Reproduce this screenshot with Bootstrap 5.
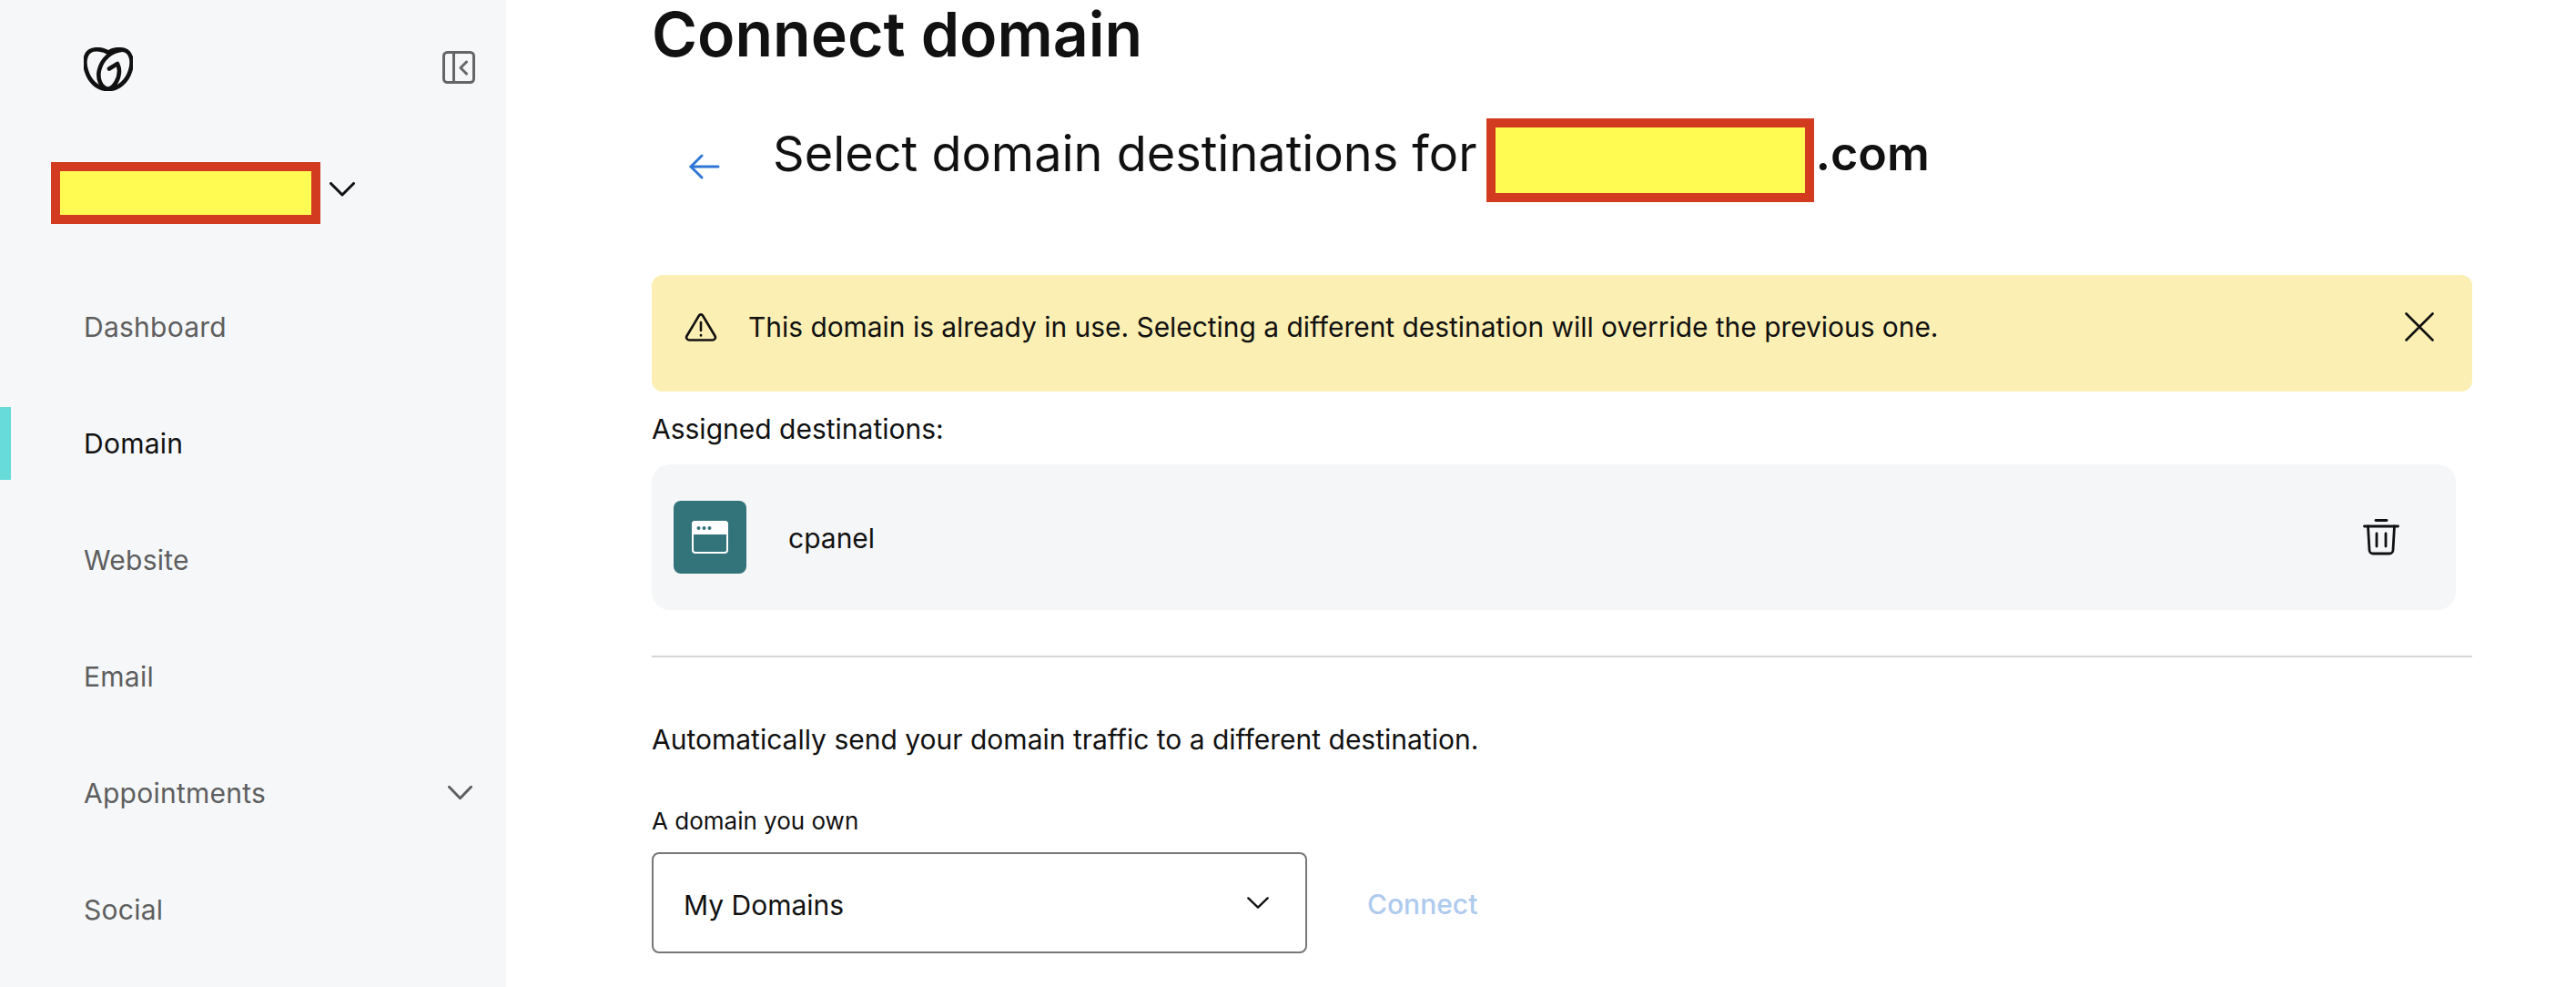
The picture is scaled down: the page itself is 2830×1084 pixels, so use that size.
<!doctype html>
<html lang="en">
<head>
<meta charset="utf-8">
<title>Connect domain</title>
<link href="https://cdn.jsdelivr.net/npm/bootstrap@5.3.0/dist/css/bootstrap.min.css" rel="stylesheet">
<style>
html,body{height:1084px;overflow:hidden}
body{font-family:Inter,"Liberation Sans",sans-serif;color:#111;background:#fff;font-size:30px}
.side-rail{width:556px;height:1084px;background:#f5f7f9;flex:none}
.side-top{padding:52px 34px 0 92px;height:178px}
.acct-row{padding-left:56px;height:117px;gap:10px;align-items:flex-start}
.acct-chev{margin-top:22px}
.redact{background:#fffb52;border-style:solid;border-color:#d23b20}
.redact-a{width:296px;height:68px;border-width:10px}
.redact-b{width:360px;height:92px;border-width:10px;margin:0 1px 0 11px}
.side-item{height:128px;color:#5e5e5e;font-size:30px;padding-right:37px;letter-spacing:.25px}
.side-item a{color:inherit;text-decoration:none}
.side-mark{width:12px;height:80px;margin-right:80px;flex:none}
.side-item.is-on{color:#111}
.side-item.is-on .side-mark{background:#66dbd9}
.main-pane{padding:0 114px 0 160px;min-width:0}
.page-title{font-size:68px;font-weight:600;line-height:74px;margin:0 0 56px 0;color:#111}
.dest-head{height:92px;margin-bottom:80px}
.back-arrow{margin:14px 58px 0 41px;flex:none;line-height:0}
.dest-title{font-size:54px;font-weight:400;margin:0;line-height:92px;padding-bottom:14px;color:#111;white-space:nowrap}
.dest-suffix{font-weight:600;font-size:52px}
.warn-box{height:128px;background:#fcefb3;border:0;border-radius:12px;margin:0 0 16px;padding:0 42px 14px 36px;color:#111;font-size:29.9px}
.warn-box svg{flex:none}
.warn-text{margin-left:34px}
.icon-btn{background:none;border:0;padding:0;line-height:0}
.assign-label{font-size:30px;line-height:50px;margin-bottom:14px}
.assign-card{height:160px;width:1982px;background:#f5f6f8;border-radius:20px;padding:0 62px 0 24px}
.app-tile{width:80px;height:80px;background:#33737a;border-radius:8px;flex:none}
.app-name{margin-left:46px;font-size:30px;padding-top:2px}
.rule-line{margin:50px 0 68px;border:0;border-top:2px solid #d6d6d6;opacity:1}
.auto-note{font-size:30px;line-height:44px;margin-bottom:48px}
.own-label{font-size:26px;line-height:40px;margin-bottom:14px;color:#111}
.dom-select{width:720px;height:111px;font-size:30px;color:#111;border:2px solid #767676;border-radius:8px;padding:6px 80px 0 33px;background-position:right 40px center;background-size:24px 13px;background-image:url("data:image/svg+xml,%3Csvg xmlns='http://www.w3.org/2000/svg' viewBox='0 0 26 14'%3E%3Cpath d='M1.5 1.5 13 12.5 24.500 1.500' fill='none' stroke='%23111' stroke-width='2.600' stroke-linecap='round' stroke-linejoin='round'/%3E%3C/svg%3E")}
.go-btn{color:#aecbee;font-size:30px;padding:4px 0 0;margin-left:66px;border:0;background:none;font-weight:500}
.go-btn:disabled{color:#aecbee;opacity:1}
</style>
</head>
<body class="d-flex">
<aside class="side-rail d-flex flex-column">
  <div class="side-top d-flex justify-content-between align-items-start">
    <svg width="54" height="48" viewBox="0 0 54 48" fill="none" stroke="#111" stroke-width="4.600" stroke-linecap="round" stroke-linejoin="round" aria-label="GoDaddy logo">
      <path d="M27 6C22 2 12 1 7 4C1 8 0 17 3 26C6 36 14 46 27 46C39 46 48 36 51 26C54 17 53 8 47 4C41 1 32 2 27 6"/>
      <path d="M27 46C18 44 15 34 17 25C20 13 30 4 41 3"/>
      <path d="M27 46C34 44 39 34 39 26C39 23 38 20 37 18L28 23.500"/>
    </svg>
    <button class="icon-btn mt-1" aria-label="Collapse">
      <svg width="36" height="36" viewBox="0 0 36 36" fill="none" stroke="#666" stroke-width="3" stroke-linecap="round" stroke-linejoin="round">
        <rect x="1.500" y="1.500" width="33" height="33" rx="4"/><path d="M12.500 1.500V34.500"/><path d="M26.500 12 20 18.500 26.500 25"/>
      </svg>
    </button>
  </div>
  <div class="acct-row d-flex">
    <div class="redact redact-a"></div>
    <svg class="acct-chev" width="28" height="16" viewBox="0 0 28 16" fill="none" stroke="#111" stroke-width="3" stroke-linecap="round" stroke-linejoin="round"><path d="M1.500 1.500 14 14 26.500 1.500"/></svg>
  </div>
  <nav class="d-flex flex-column">
    <div class="side-item d-flex align-items-center"><span class="side-mark"></span><a href="#">Dashboard</a></div>
    <div class="side-item is-on d-flex align-items-center"><span class="side-mark"></span><a href="#">Domain</a></div>
    <div class="side-item d-flex align-items-center"><span class="side-mark"></span><a href="#">Website</a></div>
    <div class="side-item d-flex align-items-center"><span class="side-mark"></span><a href="#">Email</a></div>
    <div class="side-item d-flex align-items-center"><span class="side-mark"></span><a href="#">Appointments</a>
      <svg class="ms-auto" width="27" height="18" viewBox="0 0 28 18" fill="none" stroke="#5e5e5e" stroke-width="3" stroke-linecap="round" stroke-linejoin="round"><path d="M1.500 2 14 15 26.500 2"/></svg></div>
    <div class="side-item d-flex align-items-center"><span class="side-mark"></span><a href="#">Social</a></div>
  </nav>
</aside>
<main class="main-pane flex-grow-1">
  <h1 class="page-title">Connect domain</h1>
  <div class="dest-head d-flex align-items-center">
    <a class="back-arrow" href="#" aria-label="Back">
      <svg width="34" height="28" viewBox="0 0 34 28" fill="none" stroke="#2f76d6" stroke-width="3" stroke-linecap="round" stroke-linejoin="round"><path d="M32 14H2"/><path d="M14 2 2 14 14 26"/></svg>
    </a>
    <h2 class="dest-title">Select domain destinations for</h2>
    <div class="redact redact-b"></div>
    <span class="dest-title dest-suffix">.com</span>
  </div>
  <div class="alert warn-box d-flex align-items-center" role="alert">
    <svg width="36" height="32" viewBox="0 0 36 32" fill="none" stroke="#111" stroke-width="2.600" stroke-linecap="round" stroke-linejoin="round"><path d="M16 3.500a2.300 2.300 0 0 1 4 0L33.500 26a3 3 0 0 1-2.500 4.500H5A3 3 0 0 1 2.500 26Z"/><path d="M18 11v9"/><path d="M18 25v.5"/></svg>
    <span class="warn-text flex-grow-1">This domain is already in use. Selecting a different destination will override the previous one.</span>
    <button class="icon-btn" aria-label="Close">
      <svg width="32" height="32" viewBox="0 0 32 32" fill="none" stroke="#111" stroke-width="2.600" stroke-linecap="round"><path d="M1.500 1.500 30.500 30.500M30.500 1.500 1.500 30.500"/></svg>
    </button>
  </div>
  <div class="assign-label">Assigned destinations:</div>
  <div class="assign-card d-flex align-items-center">
    <div class="app-tile d-flex align-items-center justify-content-center">
      <svg width="40" height="36" viewBox="0 0 40 36"><rect x="1" y="1" width="38" height="34" rx="3" fill="none" stroke="#fff" stroke-width="2"/><path d="M4 0H36a4 4 0 0 1 4 4V15H0V4A4 4 0 0 1 4 0Z" fill="#fff"/><circle cx="7.500" cy="8" r="2" fill="#33737a"/><circle cx="13.500" cy="8" r="2" fill="#33737a"/><circle cx="19.500" cy="8" r="2" fill="#33737a"/></svg>
    </div>
    <span class="app-name flex-grow-1">cpanel</span>
    <button class="icon-btn" aria-label="Delete">
      <svg width="40" height="40" viewBox="0 0 40 40" fill="none" stroke="#111" stroke-width="2.800" stroke-linecap="round" stroke-linejoin="round"><path d="M14 1.500H26"/><path d="M1.500 8H38.500"/><path d="M5.500 8 7 34a4 4 0 0 0 4 4H29a4 4 0 0 0 4-4L34.500 8"/><path d="M15 16V30M25 16V30"/></svg>
    </button>
  </div>
  <hr class="rule-line">
  <p class="auto-note">Automatically send your domain traffic to a different destination.</p>
  <label class="own-label d-block" for="dom">A domain you own</label>
  <div class="d-flex align-items-center">
    <select id="dom" class="form-select dom-select"><option>My Domains</option></select>
    <button class="btn go-btn" disabled>Connect</button>
  </div>
</main>
<script src="https://cdn.jsdelivr.net/npm/bootstrap@5.3.0/dist/js/bootstrap.bundle.min.js"></script>
</body>
</html>
